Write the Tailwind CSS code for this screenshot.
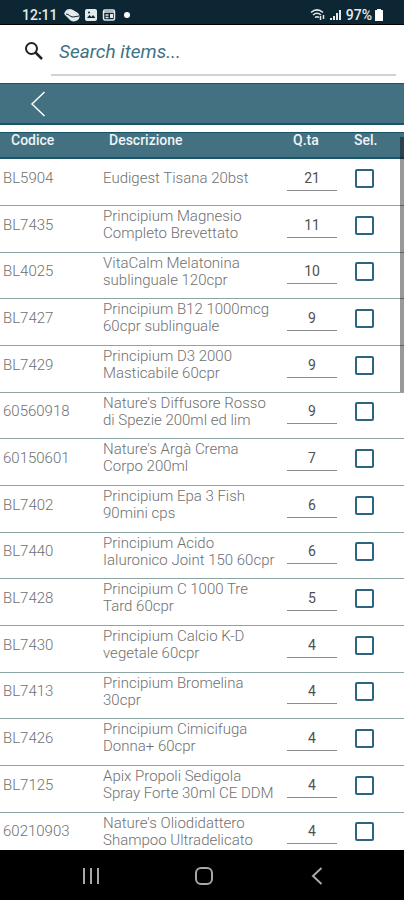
<!DOCTYPE html>
<html lang="it">

<head>
    <meta charset="UTF-8">
    <meta name="viewport" content="width=device-width, initial-scale=1.0">
    <title>Articoli</title>
    <script src="https://cdn.jsdelivr.net/npm/@tailwindcss/browser@4"></script>
</head>

<body class="flex h-screen flex-col overflow-hidden bg-white font-['Roboto',sans-serif] text-[#707070]">

    <!-- Barra di stato -->
    <div class="flex h-[25px] shrink-0 items-end justify-between border-b border-black bg-[#0c2733] pr-5 pl-[22px] text-[#e4eaec]">
        <div class="flex items-center gap-1">
            <span class="text-sm leading-[18px] font-medium">12:11</span>
            <svg class="ml-0.5 h-3.5 w-4" viewBox="0 0 16 14" fill="currentColor">
                <path d="M1 4C2 1 6 0 9 2l5 3c2 2 2 5 0 7-3 2-7 2-9-1L1 7C0 6 0 5 1 4z" />
                <path d="M2 6c3 0 4 3 7 3 2 0 4-1 6-1" fill="none" stroke="#0c2733" />
            </svg>
            <svg class="h-3.5 w-3.5" viewBox="0 0 14 14">
                <rect x="1" y="1" width="12" height="12" rx="2" fill="currentColor" />
                <path d="M3 10l2.500-3 2 2 1.500-2 2.500 3z" fill="#0c2733" />
                <circle cx="5" cy="4.500" r="1" fill="#0c2733" />
            </svg>
            <svg class="h-3.5 w-3.5" viewBox="0 0 14 14">
                <rect x="1.500" y="2" width="11" height="10" rx="1.500" fill="none" stroke="currentColor" stroke-width="1.500" />
                <path d="M2 4h10M3.500 7h3M3.500 9.500h3" stroke="currentColor" stroke-width="1.500" />
                <rect x="8" y="6" width="3" height="4" fill="currentColor" />
            </svg>
            <span class="ml-1 h-1.5 w-1.5 rounded-full bg-white"></span>
        </div>
        <div class="flex items-center gap-1">
            <svg class="h-3.5 w-4" viewBox="0 0 16 14" fill="none" stroke="currentColor" stroke-width="1.500">
                <path d="M1 4.500c4-3.500 8-3.500 12 0M3 7c3-2.500 5-2.500 8 0M5 9.500c1.500-1 2.500-1 4 0" />
                <path d="M10.500 8v4M13.500 7v4" />
            </svg>
            <svg class="h-3.5 w-3" viewBox="0 0 12 14" fill="currentColor">
                <path d="M0 10h2v2H0zM3 8h2v4H3zM6 5h2v7H6zM9 2h2v10H9z" />
            </svg>
            <span class="text-sm leading-[18px] font-medium">97%</span>
            <svg class="-ml-0.5 h-3.5 w-2.5" viewBox="0 0 10 14" fill="white">
                <path d="M3 1h4v1h1.500l.5.500V13H1V2.500L1.500 2H3z" />
            </svg>
        </div>
    </div>

    <!-- Ricerca -->
    <div class="flex h-[58px] shrink-0 items-start pr-2">
        <label for="cerca" class="mt-4 ml-6 w-[27px]" aria-label="Search items">
            <svg class="h-5 w-5" viewBox="0 0 20 20" fill="none" stroke="#222" stroke-width="2">
                <circle cx="7.500" cy="7.500" r="5.500" />
                <path d="M11.500 11.500l6.500 6.500" stroke-width="2.500" />
            </svg>
        </label>
        <input id="cerca" type="text" placeholder="Search items..."
            class="h-[51px] min-w-0 flex-1 border-b-2 border-[#d2d2d2] pt-1 pl-2 text-[19px] italic outline-none placeholder:text-[#3f7285]">
    </div>

    <!-- Intestazione con pulsante indietro -->
    <header class="flex h-[42px] shrink-0 items-center border-t border-b-2 border-[#17556a] bg-[#437182]">
        <button type="button" aria-label="Indietro" class="ml-[29px]">
            <svg class="h-7 w-[18px]" viewBox="0 0 18 28" fill="none" stroke="white" stroke-width="1.500">
                <path d="M15.500 2L3 14l12.500 12" />
            </svg>
        </button>
    </header>

    <!-- Elenco articoli -->
    <main class="relative mt-[7px] min-h-0 flex-1 overflow-hidden">
        <table class="w-full table-fixed border-separate border-spacing-0">
            <thead>
                <tr class="text-left align-top text-sm leading-[14px] text-[#eef4f6]">
                    <th class="h-[27px] w-[103px] border-t border-b-2 border-[#17556a] bg-[#437182] pl-[11px] font-medium">Codice</th>
                    <th class="border-t border-b-2 border-[#17556a] bg-[#437182] pl-1.5 font-medium">Descrizione</th>
                    <th class="w-[67px] border-t border-b-2 border-[#17556a] bg-[#437182] pl-1.5 font-medium">Q.ta</th>
                    <th class="w-[50px] border-t border-b-2 border-[#17556a] bg-[#437182] font-medium">Sel.</th>
                </tr>
            </thead>
            <tbody id="articoli">
                <!-- Le righe vengono inserite qui -->
            </tbody>
        </table>
        <div class="absolute top-[5px] right-0 h-[255px] w-1 bg-black/40"></div>
    </main>

    <!-- Barra di navigazione -->
    <nav class="flex h-[50px] shrink-0 items-center justify-around bg-black pt-0.5 pr-[31px] pl-[34px] text-[#a8a8a8]">
        <button type="button" aria-label="Recenti">
            <svg class="h-5 w-5" viewBox="0 0 20 20" fill="none" stroke="currentColor" stroke-width="2">
                <path d="M3 2v16M10 2v16M17 2v16" />
            </svg>
        </button>
        <button type="button" aria-label="Home">
            <svg class="h-5 w-5" viewBox="0 0 20 20" fill="none" stroke="currentColor" stroke-width="2">
                <rect x="2" y="2" width="16" height="16" rx="5" />
            </svg>
        </button>
        <button type="button" aria-label="Indietro">
            <svg class="h-5 w-5" viewBox="0 0 20 20" fill="none" stroke="currentColor" stroke-width="2">
                <path d="M14.500 2L6 10l8.500 8" />
            </svg>
        </button>
    </nav>

    <script>
        const articoli = [
            ['BL5904', 'Eudigest Tisana 20bst', 21],
            ['BL7435', 'Principium Magnesio<br>Completo Brevettato', 11],
            ['BL4025', 'VitaCalm Melatonina<br>sublinguale 120cpr', 10],
            ['BL7427', 'Principium B12 1000mcg<br>60cpr sublinguale', 9],
            ['BL7429', 'Principium D3 2000<br>Masticabile 60cpr', 9],
            ['60560918', "Nature's Diffusore Rosso<br>di Spezie 200ml ed lim", 9],
            ['60150601', "Nature's Argà Crema<br>Corpo 200ml", 7],
            ['BL7402', 'Principium Epa 3 Fish<br>90mini cps', 6],
            ['BL7440', 'Principium Acido<br>Ialuronico Joint 150 60cpr', 6],
            ['BL7428', 'Principium C 1000 Tre<br>Tard 60cpr', 5],
            ['BL7430', 'Principium Calcio K-D<br>vegetale 60cpr', 4],
            ['BL7413', 'Principium Bromelina<br>30cpr', 4],
            ['BL7426', 'Principium Cimicifuga<br>Donna+ 60cpr', 4],
            ['BL7125', 'Apix Propoli Sedigola<br>Spray Forte 30ml CE DDM', 4],
            ['60210903', "Nature's Oliodidattero<br>Shampoo Ultradelicato", 4]
        ];

        document.getElementById('articoli').innerHTML = articoli.map(([codice, descrizione, quantita]) => `
            <tr class="h-[47px] nth-[3n]:h-[46px]">
                <td class="border-b border-[#8ba5a5] pb-2 pl-[3px] text-[15px] leading-[17px] font-light">${codice}</td>
                <td class="border-b border-[#8ba5a5] pb-2 text-[15px] leading-[17px] font-light whitespace-nowrap">${descrizione}</td>
                <td class="border-b border-[#8ba5a5] pb-2">
                    <input type="text" inputmode="numeric" value="${quantita}" aria-label="Quantità ${codice}"
                        class="block h-[25px] w-[50px] border-b border-[#8c8c8c] text-center text-sm text-[#505050] outline-none">
                </td>
                <td class="border-b border-[#8ba5a5] pb-2">
                    <input type="checkbox" aria-label="Seleziona ${codice}"
                        class="block ml-px h-[19px] w-[19px] appearance-none rounded-xs border-2 border-[#2d6480] checked:bg-[#2d6480]">
                </td>
            </tr>`).join('');
    </script>
</body>

</html>
